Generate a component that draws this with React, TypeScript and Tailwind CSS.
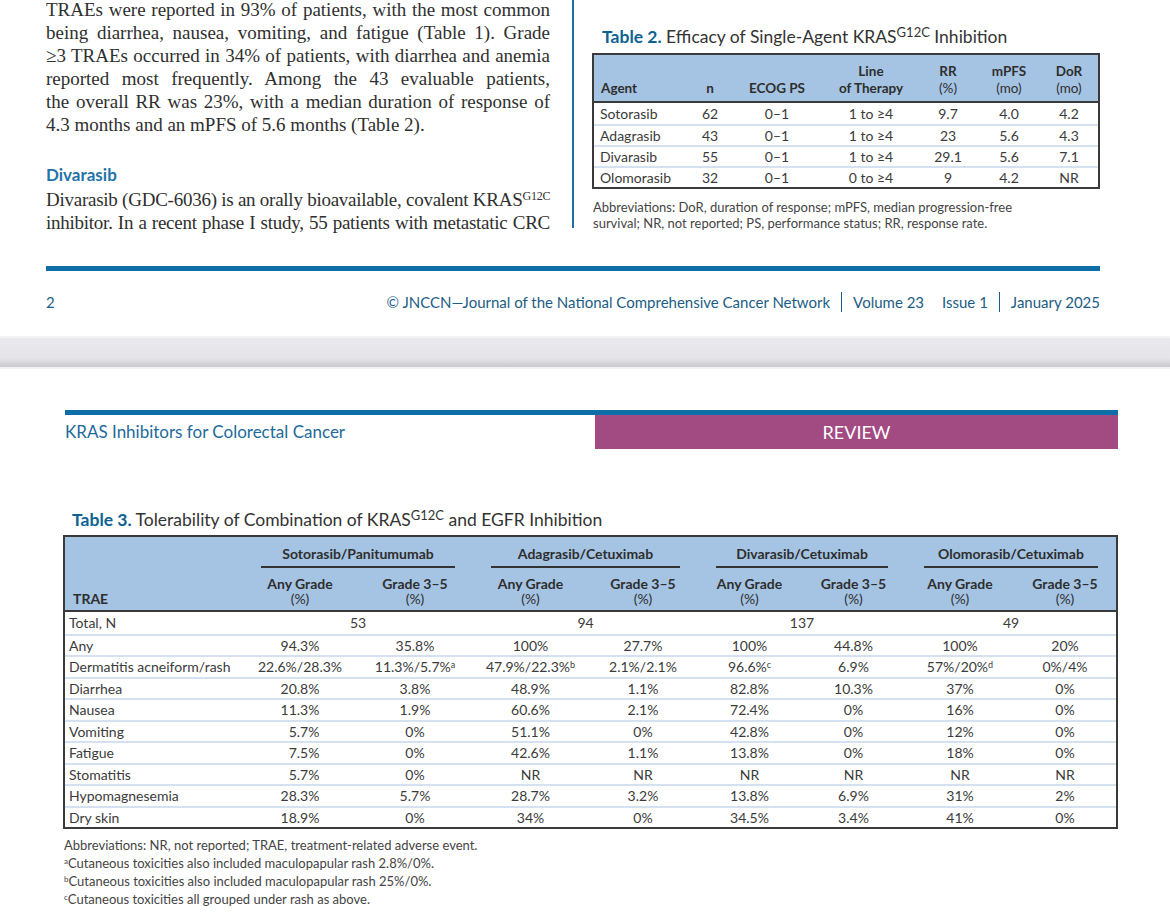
import React from 'react'

const SANS = "font-['Lato','Open_Sans',sans-serif]"
const SERIF = "font-['Liberation_Serif','Times_New_Roman',serif]"

const BODY_LINES = [
  'TRAEs were reported in 93% of patients, with the most common',
  'being diarrhea, nausea, vomiting, and fatigue (Table 1). Grade',
  '≥3 TRAEs occurred in 34% of patients, with diarrhea and anemia',
  'reported most frequently. Among the 43 evaluable patients,',
  'the overall RR was 23%, with a median duration of response of',
]

const T2_COLS = 'grid grid-cols-[96px_40px_94px_94px_60px_62px_58px]'
const T2_ROWS = [
  ['Sotorasib', '62', '0–1', '1 to ≥4', '9.7', '4.0', '4.2'],
  ['Adagrasib', '43', '0–1', '1 to ≥4', '23', '5.6', '4.3'],
  ['Divarasib', '55', '0–1', '1 to ≥4', '29.1', '5.6', '7.1'],
  ['Olomorasib', '32', '0–1', '0 to ≥4', '9', '4.2', 'NR'],
]

const T3_COLS = 'grid grid-cols-[178px_114px_116px_115px_110px_103px_105px_108px_102px]'
const GROUPS = ['Sotorasib/Panitumumab', 'Adagrasib/Cetuximab', 'Divarasib/Cetuximab', 'Olomorasib/Cetuximab']
const TOTALS = ['53', '94', '137', '49']

type Cell = string | [string, string]
const T3_ROWS: [string, Cell[]][] = [
  ['Any', ['94.3%', '35.8%', '100%', '27.7%', '100%', '44.8%', '100%', '20%']],
  ['Dermatitis acneiform/rash', ['22.6%/28.3%', ['11.3%/5.7%', 'a'], ['47.9%/22.3%', 'b'], '2.1%/2.1%', ['96.6%', 'c'], '6.9%', ['57%/20%', 'd'], '0%/4%']],
  ['Diarrhea', ['20.8%', '3.8%', '48.9%', '1.1%', '82.8%', '10.3%', '37%', '0%']],
  ['Nausea', ['11.3%', '1.9%', '60.6%', '2.1%', '72.4%', '0%', '16%', '0%']],
  ['Vomiting', ['\u20075.7%', '0%', '51.1%', '0%', '42.8%', '0%', '12%', '0%']],
  ['Fatigue', ['\u20077.5%', '0%', '42.6%', '1.1%', '13.8%', '0%', '18%', '0%']],
  ['Stomatitis', ['\u20075.7%', '0%', 'NR', 'NR', 'NR', 'NR', 'NR', 'NR']],
  ['Hypomagnesemia', ['28.3%', '5.7%', '28.7%', '3.2%', '13.8%', '6.9%', '31%', '2%']],
  ['Dry skin', ['18.9%', '0%', '34%', '0%', '34.5%', '3.4%', '41%', '0%']],
]

function JustLine({ text, last, tight }: { text: React.ReactNode; last?: boolean; tight?: boolean }) {
  return (
    <div
      className={
        (last ? 'whitespace-nowrap' : 'whitespace-nowrap text-justify [text-align-last:justify]') +
        (tight ? ' tracking-[-0.25px]' : '')
      }
    >
      {text}
    </div>
  )
}

function Table2() {
  return (
    <div>
      <div className="mt-[27px] pl-[10px] text-[17.5px] leading-[20px] text-[#333]">
        <span className="font-bold text-[#0d6291]">Table 2.</span> Efficacy of Single-Agent KRAS
        <sup className="text-[13px]">G12C</sup> Inhibition
      </div>
      <div className="mt-[6px] border-2 border-[#3a3a3a] text-[14px] text-[#3b3b3b]">
        <div
          className={`${T2_COLS} h-[48px] items-end bg-[#a5c4e4] border-b-2 border-[#3a3a3a] pb-[4px] text-[13.5px] font-bold leading-[17px] text-[#2e2e2e]`}
        >
          <div className="pl-[7px]">Agent</div>
          <div className="text-center">n</div>
          <div className="text-center">ECOG PS</div>
          <div className="text-center">
            Line
            <br />
            of Therapy
          </div>
          <div className="text-center">
            RR
            <br />
            <span className="font-normal">(%)</span>
          </div>
          <div className="text-center">
            mPFS
            <br />
            <span className="font-normal">(mo)</span>
          </div>
          <div className="text-center">
            DoR
            <br />
            <span className="font-normal">(mo)</span>
          </div>
        </div>
        {T2_ROWS.map((row, i) => (
          <div
            key={row[0]}
            className={`${T2_COLS} h-[21px] items-center leading-[19px] ${i > 0 ? 'border-t-2 border-[#d4e1f1]' : ''}`}
          >
            {row.map((c, j) => (
              <div key={j} className={j === 0 ? 'pl-[6px]' : 'text-center'}>
                {c}
              </div>
            ))}
          </div>
        ))}
      </div>
      <div className="mt-[10px] pl-[1px] text-[13px] leading-[16px] text-[#444]">
        Abbreviations: DoR, duration of response; mPFS, median progression-free
        <br />
        survival; NR, not reported; PS, performance status; RR, response rate.
      </div>
    </div>
  )
}

function Table3() {
  return (
    <div className="ml-[63px] w-[1055px]">
      <div className="pl-[9px] text-[17.5px] leading-[20px] text-[#333]">
        <span className="font-bold text-[#0d6291]">Table 3.</span> Tolerability of Combination of KRAS
        <sup className="text-[13px]">G12C</sup> and EGFR Inhibition
      </div>
      <div className="mt-[5px] border-2 border-[#3a3a3a] text-[14px] text-[#3b3b3b]">
        {/* header */}
        <div className={`${T3_COLS} bg-[#a5c4e4] border-b-2 border-[#3a3a3a] text-[14px] font-bold text-[#2e2e2e]`}>
          <div className="row-span-2 self-end pb-[4px] pl-[8px] leading-[15px]">TRAE</div>
          {GROUPS.map((g) => (
            <div key={g} className="col-span-2 pt-[9px]">
              <div className="text-center leading-[16px]">{g}</div>
              <div className="mx-[18px] mt-[4px] h-[2px] bg-[#333]" />
            </div>
          ))}
          {GROUPS.map((g) => (
            <React.Fragment key={g}>
              <div className="mt-[8px] pb-[4px] text-center leading-[15px]">
                Any Grade
                <br />
                <span className="font-normal">(%)</span>
              </div>
              <div className="mt-[8px] pb-[4px] text-center leading-[15px]">
                Grade 3–5
                <br />
                <span className="font-normal">(%)</span>
              </div>
            </React.Fragment>
          ))}
        </div>
        {/* total row */}
        <div className={`${T3_COLS} h-[21.5px] items-center leading-[19px]`}>
          <div className="pl-[4px]">Total, N</div>
          {TOTALS.map((t) => (
            <div key={t} className="col-span-2 text-center">
              {t}
            </div>
          ))}
        </div>
        {T3_ROWS.map(([label, cells]) => (
          <div
            key={label}
            className={`${T3_COLS} h-[21.5px] items-center border-t-2 border-[#d4e1f1] leading-[19px]`}
          >
            <div className="pl-[4px] whitespace-nowrap">{label}</div>
            {cells.map((c, j) => (
              <div key={j} className="text-center whitespace-nowrap">
                {typeof c === 'string' ? (
                  c
                ) : (
                  <>
                    {c[0]}
                    <sup className="text-[9px]">{c[1]}</sup>
                  </>
                )}
              </div>
            ))}
          </div>
        ))}
      </div>
      <div className="mt-[7px] pl-[1px] text-[13px] leading-[18px] text-[#444]">
        <div>Abbreviations: NR, not reported; TRAE, treatment-related adverse event.</div>
        <div>
          <sup className="text-[8px]">a</sup>Cutaneous toxicities also included maculopapular rash 2.8%/0%.
        </div>
        <div>
          <sup className="text-[8px]">b</sup>Cutaneous toxicities also included maculopapular rash 25%/0%.
        </div>
        <div>
          <sup className="text-[8px]">c</sup>Cutaneous toxicities all grouped under rash as above.
        </div>
      </div>
    </div>
  )
}

export default function App() {
  return (
    <div className={`w-[1170px] h-[913px] overflow-hidden bg-white ${SANS}`}>
      {/* Page 1 bottom */}
      <div className="flex h-[228px] pl-[46px]">
        <div className={`w-[504px] -mt-[2px] text-[19px] leading-[23px] text-[#2f2f2f] ${SERIF}`}>
          {BODY_LINES.map((l) => (
            <JustLine key={l} text={l} />
          ))}
          <JustLine last text="4.3 months and an mPFS of 5.6 months (Table 2)." />
          <div className={`mt-[28px] text-[17px] font-bold leading-[22px] text-[#1f74a8] ${SANS}`}>Divarasib</div>
          <div className="mt-[2px]">
            <JustLine
              tight
              text={
                <>
                  Divarasib (GDC-6036) is an orally bioavailable, covalent KRAS
                  <sup className="text-[12px]">G12C</sup>
                </>
              }
            />
            <JustLine tight text="inhibitor. In a recent phase I study, 55 patients with metastatic CRC" />
          </div>
        </div>
        <div className="ml-[22px] h-[228px] w-[2px] bg-[#1f6fa3]" />
        <div className="ml-[18px] w-[508px]">
          <Table2 />
        </div>
      </div>

      {/* Page 1 footer */}
      <div className="ml-[46px] mt-[38px] h-[5px] w-[1054px] bg-[#0f6ea8]" />
      <div className="ml-[46px] mt-[21px] flex h-[20px] w-[1054px] items-center justify-between text-[15px] text-[#1d5d85]">
        <span>2</span>
        <div className="flex items-center">
          <span>© JNCCN—Journal of the National Comprehensive Cancer Network</span>
          <span className="mx-[11px] h-[20px] w-px bg-[#1d5d85]" />
          <span>Volume 23</span>
          <span className="ml-[18px]">Issue 1</span>
          <span className="mx-[11px] h-[20px] w-px bg-[#1d5d85]" />
          <span>January 2025</span>
        </div>
      </div>

      {/* Page gap */}
      <div className="mt-[24px] h-[2px] bg-[#f3f3f4]" />
      <div className="h-[29px] bg-[linear-gradient(to_bottom,#eae9ee_0%,#e5e4e9_70%,#c9c8cd_100%)]" />
      <div className="h-[2px] bg-[#f3f3f4]" />

      {/* Page 2 header */}
      <div className="ml-[65px] mt-[41px] h-[5px] w-[1053px] bg-[#0f6ea8]" />
      <div className="ml-[65px] flex h-[34px] w-[1053px]">
        <div className="flex w-[530px] items-center text-[17px] text-[#1e6a9b]">KRAS Inhibitors for Colorectal Cancer</div>
        <div className="flex flex-1 items-center justify-center bg-[#a24b82] text-[18px] text-white">REVIEW</div>
      </div>

      {/* Table 3 */}
      <div className="mt-[61px]">
        <Table3 />
      </div>
    </div>
  )
}
